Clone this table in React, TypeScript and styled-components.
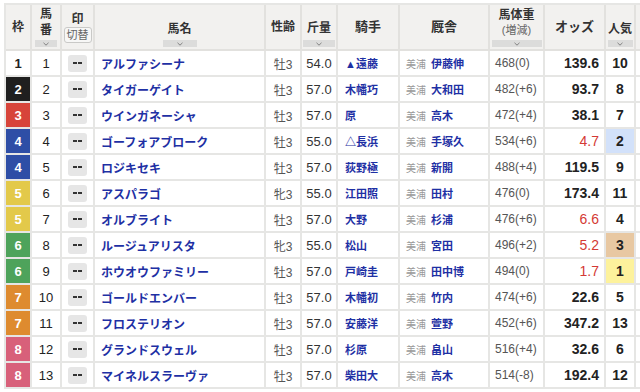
import React from "react";
import styled, { createGlobalStyle } from "styled-components";

const GlobalStyle = createGlobalStyle`
  html, body { margin: 0; padding: 0; background: #ffffff; overflow: hidden; }
  body { font-family: "Liberation Sans", "Noto Sans CJK JP", sans-serif; color: #333; }
`;

const COLS = "26px 30px 33px 171px 36px 36px 62px 90px 55px 61px 30px 4px";
const LINE = "#e6e6e4";

const Page = styled.div`
  padding: 3px 0 0 4px;
  width: 640px;
  box-sizing: border-box;
  overflow: hidden;
`;

const Table = styled.div`
  display: flex;
  flex-direction: column;
  border-left: 2px solid ${LINE};
  border-top: 2px solid ${LINE};
  width: max-content;
`;

const Row = styled.div<{ $header?: boolean }>`
  display: grid;
  grid-template-columns: ${COLS};
  height: ${(p) => (p.$header ? "46px" : "26px")};
  background: ${(p) => (p.$header ? "#f2f1ef" : "#ffffff")};
`;

const Cell = styled.div<{ $align?: "left" | "center" | "right"; $bg?: string; $pl?: number; $pr?: number; $last?: boolean }>`
  box-sizing: border-box;
  border-right: ${(p) => (p.$last ? "none" : `2px solid ${LINE}`)};
  border-bottom: 2px solid ${LINE};
  display: flex;
  align-items: center;
  justify-content: ${(p) =>
    p.$align === "left" ? "flex-start" : p.$align === "right" ? "flex-end" : "center"};
  padding-left: ${(p) => p.$pl ?? 0}px;
  padding-right: ${(p) => p.$pr ?? 0}px;
  background: ${(p) => p.$bg ?? "transparent"};
  white-space: nowrap;
  overflow: hidden;
`;

const HeadCell = styled.div<{ $end?: boolean; $last?: boolean }>`
  box-sizing: border-box;
  border-right: ${(p) => (p.$last ? "none" : "2px solid #e2e1de")};
  border-bottom: 2px solid #e2e1de;
  display: flex;
  flex-direction: column;
  align-items: center;
  justify-content: ${(p) => (p.$end ? "flex-end" : "center")};
  padding-bottom: ${(p) => (p.$end ? "2px" : "0")};
  font-weight: bold;
  font-size: 12px;
  color: #333;
  overflow: hidden;
`;

const HeadLabel = styled.span<{ $size?: number; $mb?: number; $lh?: number }>`
  font-size: ${(p) => p.$size ?? 12}px;
  line-height: ${(p) => p.$lh ?? 14}px;
  margin-bottom: ${(p) => p.$mb ?? 0}px;
  font-weight: bold;
`;

const HeadSub = styled.span`
  font-size: 11px;
  font-weight: normal;
  color: #666;
  line-height: 14px;
  margin-bottom: 3px;
`;

const SortBarBox = styled.div<{ $w: number }>`
  width: ${(p) => p.$w}px;
  height: 7px;
  background: #dcdcdb;
  display: flex;
  align-items: center;
  justify-content: center;
`;

const SortBar = ({ w }: { w: number }) => (
  <SortBarBox $w={w}>
    <svg width="6" height="4" viewBox="0 0 6 4">
      <path d="M0.5 0.8 L3 3.2 L5.5 0.8" fill="none" stroke="#777" strokeWidth="0.9" />
    </svg>
  </SortBarBox>
);

const SwitchButton = styled.div`
  box-sizing: border-box;
  width: 28px;
  height: 16px;
  border: 1px solid #c9c9c7;
  border-radius: 3px;
  background: #f7f7f6;
  font-size: 11px;
  font-weight: normal;
  color: #666;
  line-height: 14px;
  text-align: center;
`;

const WakuNum = styled.span<{ $dark?: boolean }>`
  font-size: 13px;
  font-weight: bold;
  color: ${(p) => (p.$dark ? "#222" : "#ffffff")};
`;

const Num = styled.span`
  font-size: 13px;
  color: #222;
`;

const MarkButton = styled.div`
  width: 19px;
  height: 17px;
  border-radius: 3px;
  background: #e6e6e6;
  display: flex;
  align-items: center;
  justify-content: center;
  gap: 1px;
`;

const Dash = styled.span`
  display: block;
  width: 4px;
  height: 2px;
  background: #333;
`;

const HorseName = styled.span`
  font-size: 12px;
  font-weight: bold;
  color: #1e30a4;
`;

const Plain = styled.span<{ $size?: number; $color?: string }>`
  font-size: ${(p) => p.$size ?? 12}px;
  color: ${(p) => p.$color ?? "#555"};
`;

const Person = styled.span`
  font-size: 11px;
  font-weight: bold;
  color: #1e30a4;
`;

const Stable = styled.span`
  font-size: 10px;
  color: #999;
  margin-right: 5px;
`;

const Odds = styled.span<{ $hot: boolean }>`
  font-size: 14px;
  font-weight: ${(p) => (p.$hot ? "normal" : "bold")};
  color: ${(p) => (p.$hot ? "#d43a35" : "#222")};
`;

const Pop = styled.span`
  font-size: 14px;
  font-weight: bold;
  color: #222;
`;

const WAKU: Record<number, string> = {
  1: "#ffffff",
  2: "#1f1f1f",
  3: "#d7443a",
  4: "#2e4ea6",
  5: "#e3c94a",
  6: "#4ea35b",
  7: "#de8b2f",
  8: "#d8607a",
};

const POP_BG: Record<number, string> = {
  1: "#fdf29c",
  2: "#d2e1fa",
  3: "#e8c8a2",
};

type Horse = [number, number, string, string, string, string, string, string, string, number];

const horses: Horse[] = [
  [1, 1, "アルファシーナ", "牡3", "54.0", "▲遠藤", "伊藤伸", "468(0)", "139.6", 10],
  [2, 2, "タイガーゲイト", "牡3", "57.0", "木幡巧", "大和田", "482(+6)", "93.7", 8],
  [3, 3, "ウインガネーシャ", "牡3", "57.0", "原", "高木", "472(+4)", "38.1", 7],
  [4, 4, "ゴーフォアブローク", "牡3", "55.0", "△長浜", "手塚久", "534(+6)", "4.7", 2],
  [4, 5, "ロジキセキ", "牡3", "57.0", "荻野極", "新開", "488(+4)", "119.5", 9],
  [5, 6, "アスパラゴ", "牝3", "55.0", "江田照", "田村", "476(0)", "173.4", 11],
  [5, 7, "オルブライト", "牡3", "57.0", "大野", "杉浦", "476(+6)", "6.6", 4],
  [6, 8, "ルージュアリスタ", "牝3", "55.0", "松山", "宮田", "496(+2)", "5.2", 3],
  [6, 9, "ホウオウファミリー", "牡3", "57.0", "戸崎圭", "田中博", "494(0)", "1.7", 1],
  [7, 10, "ゴールドエンバー", "牡3", "57.0", "木幡初", "竹内", "474(+6)", "22.6", 5],
  [7, 11, "フロステリオン", "牡3", "57.0", "安藤洋", "萱野", "452(+6)", "347.2", 13],
  [8, 12, "グランドスウェル", "牡3", "57.0", "杉原", "畠山", "516(+4)", "32.6", 6],
  [8, 13, "マイネルスラーヴァ", "牡3", "57.0", "柴田大", "高木", "514(-8)", "192.4", 12],
];

export default function App() {
  return (
    <Page>
      <GlobalStyle />
      <Table>
        <Row $header>
          <HeadCell>
            <HeadLabel>枠</HeadLabel>
          </HeadCell>
          <HeadCell $end>
            <HeadLabel $lh={16}>馬</HeadLabel>
            <HeadLabel $lh={16} $mb={2}>番</HeadLabel>
            <SortBar w={22} />
          </HeadCell>
          <HeadCell>
            <HeadLabel $mb={1}>印</HeadLabel>
            <SwitchButton>切替</SwitchButton>
          </HeadCell>
          <HeadCell $end>
            <HeadLabel $mb={4}>馬名</HeadLabel>
            <SortBar w={34} />
          </HeadCell>
          <HeadCell>
            <HeadLabel>性齢</HeadLabel>
          </HeadCell>
          <HeadCell $end>
            <HeadLabel $mb={5}>斤量</HeadLabel>
            <SortBar w={32} />
          </HeadCell>
          <HeadCell>
            <HeadLabel $size={13}>騎手</HeadLabel>
          </HeadCell>
          <HeadCell>
            <HeadLabel $size={13}>厩舎</HeadLabel>
          </HeadCell>
          <HeadCell $end>
            <HeadLabel $mb={1}>馬体重</HeadLabel>
            <HeadSub>(増減)</HeadSub>
            <SortBar w={50} />
          </HeadCell>
          <HeadCell>
            <HeadLabel $size={13}>オッズ</HeadLabel>
          </HeadCell>
          <HeadCell $end>
            <HeadLabel $mb={4}>人気</HeadLabel>
            <SortBar w={25} />
          </HeadCell>
          <HeadCell $last />
        </Row>
        {horses.map((h) => {
          const [waku, num, name, sex, weight, jockey, trainer, bw, odds, pop] = h;
          const hot = parseFloat(odds) < 10;
          return (
            <Row key={num}>
              <Cell $bg={WAKU[waku]}>
                <WakuNum $dark={waku === 1}>{waku}</WakuNum>
              </Cell>
              <Cell>
                <Num>{num}</Num>
              </Cell>
              <Cell>
                <MarkButton>
                  <Dash />
                  <Dash />
                </MarkButton>
              </Cell>
              <Cell $align="left" $pl={6}>
                <HorseName>{name}</HorseName>
              </Cell>
              <Cell>
                <Plain $size={12} $color="#555">{sex}</Plain>
              </Cell>
              <Cell>
                <Plain $size={13} $color="#333">{weight}</Plain>
              </Cell>
              <Cell $align="left" $pl={7}>
                <Person>{jockey}</Person>
              </Cell>
              <Cell $align="left" $pl={6}>
                <Stable>美浦</Stable>
                <Person>{trainer}</Person>
              </Cell>
              <Cell $align="left" $pl={5}>
                <Plain $size={12} $color="#555">{bw}</Plain>
              </Cell>
              <Cell $align="right" $pr={5}>
                <Odds $hot={hot}>{odds}</Odds>
              </Cell>
              <Cell $bg={POP_BG[pop]}>
                <Pop>{pop}</Pop>
              </Cell>
              <Cell $last />
            </Row>
          );
        })}
      </Table>
    </Page>
  );
}
